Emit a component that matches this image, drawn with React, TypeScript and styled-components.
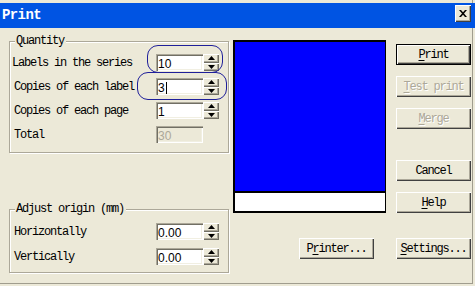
import React from 'react';
import styled, { createGlobalStyle, css } from 'styled-components';

const FACE = '#ECE9D8';

const Global = createGlobalStyle`
  html, body { margin: 0; padding: 0; background: ${FACE}; }
  body { width: 475px; height: 286px; overflow: hidden; }
`;

const Window = styled.div`
  position: relative;
  width: 475px;
  height: 286px;
  box-sizing: border-box;
  padding-top: 3px;
  background: ${FACE};
  box-shadow: inset -2px -2px 0 ${FACE}, inset -3px -3px 0 #A09D8E;
  display: flex;
  flex-direction: column;
  font-family: "Liberation Mono", "Courier New", monospace;
  font-size: 12px;
  letter-spacing: -1.2px;
  color: #000;
`;

const TitleBar = styled.div`
  height: 25px;
  flex: none;
  background: #0054E3;
  display: flex;
  justify-content: space-between;
  align-items: flex-start;
  padding: 0 4px 0 2px;
`;

const Title = styled.div`
  color: #fff;
  font-weight: bold;
  font-size: 14px;
  letter-spacing: -0.6px;
  line-height: 25px;
`;

const CloseButton = styled.div`
  margin-top: 2px;
  width: 16px;
  height: 17px;
  box-sizing: border-box;
  background: ${FACE};
  box-shadow: inset 1px 1px #fff, inset -1px -1px #404040, inset -2px -2px #ACA899;
  display: flex;
  align-items: center;
  justify-content: center;
`;

const Body = styled.div`
  flex: 1;
  display: flex;
  padding-left: 9px;
`;

const LeftColumn = styled.div`
  width: 220px;
  padding-top: 7px;
  display: flex;
  flex-direction: column;
`;

const GroupBox = styled.fieldset<{ $pt: number; $pb: number; $gap: number; $mt?: number }>`
  margin: ${(p) => p.$mt ?? 0}px 0 0 0;
  width: 220px;
  box-sizing: border-box;
  border: 1px solid #ACA899;
  box-shadow: inset 1px 1px 0 #fff, 1px 1px 0 #fff;
  padding: ${(p) => p.$pt}px 9px ${(p) => p.$pb}px 4px;
  display: flex;
  flex-direction: column;
  gap: ${(p) => p.$gap}px;
  min-width: 0;
`;

const Legend = styled.legend`
  margin-left: 1px;
  padding: 0 2px 0 1px;
  line-height: 12px;
  background: ${FACE};
`;

const Row = styled.div`
  display: grid;
  grid-template-columns: 142px 47px 16px;
  align-items: center;
  height: 17px;
`;

const Label = styled.span<{ $shift?: number }>`
  margin-left: ${(p) => p.$shift ?? 0}px;
  white-space: nowrap;
`;

const Field = styled.div<{ $disabled?: boolean }>`
  height: 17px;
  box-sizing: border-box;
  padding: 2px 2px 0 2px;
  font-family: "Liberation Sans", Arial, sans-serif;
  font-size: 12px;
  letter-spacing: 0;
  line-height: 14px;
  display: flex;
  align-items: center;
  background: ${(p) => (p.$disabled ? FACE : '#fff')};
  color: ${(p) => (p.$disabled ? '#ACA899' : '#000')};
  box-shadow: inset 1px 1px #ACA899, inset 2px 2px #716F64, inset -1px -1px #fff, inset -2px -2px #F1EFE2;
`;

const Caret = styled.span`
  display: inline-block;
  width: 1px;
  height: 12px;
  background: #000;
  margin-left: 1px;
`;

const Spin = styled.div`
  height: 17px;
  display: flex;
  flex-direction: column;
`;

const SpinHalf = styled.div`
  flex: 1;
  background: ${FACE};
  box-shadow: inset 1px 1px #fff, inset -1px -1px #716F64, inset -2px -2px #ACA899;
  display: flex;
  align-items: center;
  justify-content: center;
`;

const RightPanel = styled.div`
  margin-left: 4px;
  padding-top: 12px;
  display: grid;
  grid-template-columns: 153px 75px;
  grid-template-rows: auto auto;
  column-gap: 10px;
  row-gap: 25px;
  align-content: start;
`;

const Preview = styled.div`
  height: 173px;
  box-sizing: border-box;
  border: 2px solid #000;
  border-right-width: 1px;
  display: flex;
  flex-direction: column;
`;

const PreviewLabel = styled.div`
  flex: 1;
  background: #0000FF;
`;

const PreviewFooter = styled.div`
  height: 18px;
  border-top: 2px solid #000;
  background: #fff;
`;

const ButtonStack = styled.div`
  padding-top: 4px;
  display: flex;
  flex-direction: column;
  gap: 11px;
`;

const Button = styled.div<{ $default?: boolean; $disabled?: boolean; $push?: number; $end?: boolean }>`
  width: 75px;
  height: 21px;
  box-sizing: border-box;
  margin-top: ${(p) => p.$push ?? 0}px;
  ${(p) => p.$end && css`justify-self: end; margin-right: 12px;`}
  background: ${FACE};
  display: flex;
  align-items: center;
  justify-content: center;
  line-height: 12px;
  white-space: nowrap;
  box-shadow: inset 1px 1px #fff, inset -1px -1px #404040, inset -2px -2px #ACA899;
  ${(p) =>
    p.$default &&
    css`
      border: 1px solid #000;
    `}
  ${(p) =>
    p.$disabled &&
    css`
      color: #ACA899;
      text-shadow: 1px 1px 0 #fff;
    `}
  u { text-decoration: underline; text-underline-offset: 2px; }
`;

const Oval = styled.div<{ $x: number; $y: number; $w: number; $h: number }>`
  position: absolute;
  left: ${(p) => p.$x}px;
  top: ${(p) => p.$y}px;
  width: ${(p) => p.$w}px;
  height: ${(p) => p.$h}px;
  box-sizing: border-box;
  border: 1px solid #1F1F9A;
  border-radius: 11px;
  pointer-events: none;
`;

const Arrow = ({ up }: { up?: boolean }) => (
  <svg width="7" height="4" viewBox="0 0 7 4">
    {up ? <polygon points="3.5,0 7,4 0,4" fill="#000" /> : <polygon points="0,0 7,0 3.5,4" fill="#000" />}
  </svg>
);

const Spinner = () => (
  <Spin>
    <SpinHalf>
      <Arrow up />
    </SpinHalf>
    <SpinHalf>
      <Arrow />
    </SpinHalf>
  </Spin>
);

const NumberRow = ({
  label,
  value,
  shift,
  caret,
  disabled,
}: {
  label: string;
  value: string;
  shift?: number;
  caret?: boolean;
  disabled?: boolean;
}) => (
  <Row>
    <Label $shift={shift}>{label}</Label>
    <Field $disabled={disabled}>
      {value}
      {caret && <Caret />}
    </Field>
    {!disabled && <Spinner />}
  </Row>
);

export default function App() {
  return (
    <>
      <Global />
      <Window>
        <TitleBar>
          <Title>Print</Title>
          <CloseButton>
            <svg width="8" height="7" viewBox="0 0 8 7">
              <path d="M0 0h2l2 2.2L6 0h2L5 3.5 8 7H6L4 4.8 2 7H0l3-3.5z" fill="#000" />
            </svg>
          </CloseButton>
        </TitleBar>
        <Body>
          <LeftColumn>
            <GroupBox $pt={7} $pb={9} $gap={7}>
              <Legend>Quantity</Legend>
              <NumberRow label="Labels in the series" value="10" shift={-2} />
              <NumberRow label="Copies of each label" value="3" caret />
              <NumberRow label="Copies of each page" value="1" />
              <NumberRow label="Total" value="30" disabled />
            </GroupBox>
            <GroupBox $pt={8} $pb={7} $gap={8} $mt={50}>
              <Legend>Adjust origin (mm)</Legend>
              <NumberRow label="Horizontally" value="0.00" />
              <NumberRow label="Vertically" value="0.00" />
            </GroupBox>
          </LeftColumn>
          <RightPanel>
            <Preview>
              <PreviewLabel />
              <PreviewFooter />
            </Preview>
            <ButtonStack>
              <Button $default>
                <u>P</u>rint
              </Button>
              <Button $disabled>
                <u>T</u>est print
              </Button>
              <Button $disabled>
                <u>M</u>erge
              </Button>
              <Button $push={20}>Cancel</Button>
              <Button>
                <u>H</u>elp
              </Button>
            </ButtonStack>
            <Button $end>
              P<u>r</u>inter...
            </Button>
            <Button>
              <u>S</u>ettings...
            </Button>
          </RightPanel>
        </Body>
        <Oval $x={147} $y={45} $w={76} $h={28} />
        <Oval $x={137} $y={72} $w={90} $h={28} />
      </Window>
    </>
  );
}
